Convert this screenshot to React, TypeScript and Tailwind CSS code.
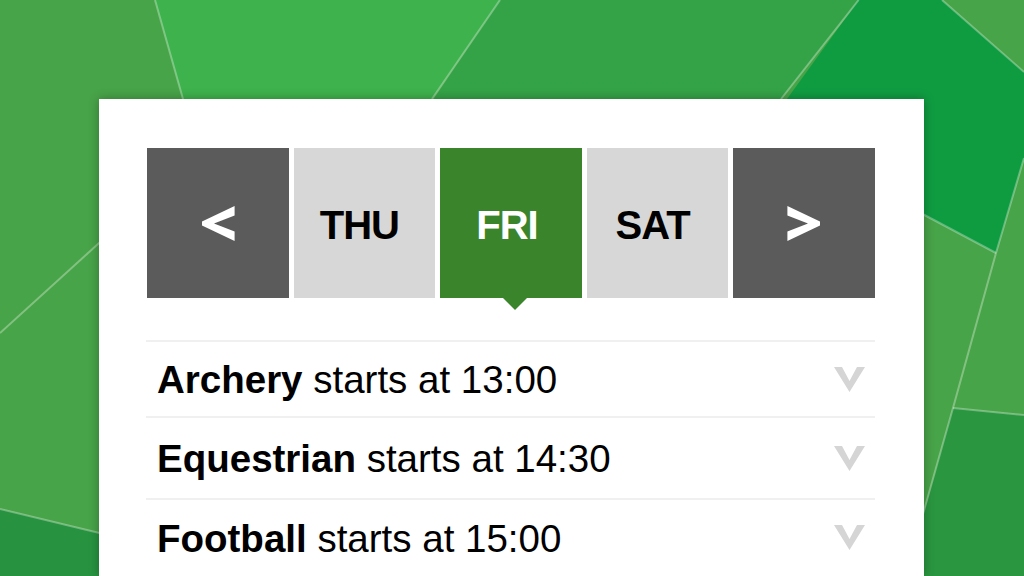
const days = [
    { label: 'THU', active: false },
    { label: 'FRI', active: true },
    { label: 'SAT', active: false },
];

const events = [
    { sport: 'Archery', time: '13:00', h: 'h-[76px]' },
    { sport: 'Equestrian', time: '14:30', h: 'h-[82px]' },
    { sport: 'Football', time: '15:00', h: 'h-[77px]' },
];

const Background = () => {
    return (
        <svg className="absolute inset-0" width="1024" height="576" viewBox="0 0 1024 576">
            <rect width="1024" height="576" fill="#48a448" />
            <polygon points="155,0 500,0 432,99 400,150 197,150" fill="#3eb24d" />
            <polygon points="500,0 858.7,0 781,99 750,150 400,150" fill="#34a347" />
            <polygon points="858.7,0 942,0 1024,72 1024,158 996,253 924,215 850,180 750,150" fill="#0f9c41" />
            <polygon points="953,408 1024,415 1024,576 880,576 924,513" fill="#2a9640" />
            <polygon points="0,509 99,533 160,548 160,576 0,576" fill="#279340" />
            <g stroke="rgba(255,255,255,0.32)" strokeWidth="2" fill="none">
                <line x1="155" y1="0" x2="183" y2="99" />
                <line x1="500" y1="0" x2="432" y2="99" />
                <line x1="0" y1="333" x2="120" y2="224" />
                <line x1="0" y1="509" x2="120" y2="538" />
                <line x1="858.7" y1="0" x2="781" y2="99" />
                <line x1="942" y1="0" x2="1024" y2="72" />
                <polyline points="1024,158 996,253 953,408 910,560" />
                <line x1="900" y1="202" x2="996" y2="253" />
                <line x1="953" y1="408" x2="1024" y2="415" />
            </g>
        </svg>
    );
};

const Arrow = ({ dir }: { dir: 'left' | 'right' }) => {
    return (
        <svg width="33" height="35" viewBox="0 0 33 35" className={dir === 'right' ? 'scale-x-[-1]' : ''}>
            <polygon points="0,15.5 32.6,0 32.6,9.5 12,17.5 32.6,25.5 32.6,35 0,19.5" fill="#fff" />
        </svg>
    );
};

const App = () => {
    return (
        <div className="relative h-[576px] w-[1024px] overflow-hidden font-['Liberation_Sans',Arial,sans-serif]">
            <Background />
            <div className="relative pl-[99px] pt-[99px]">
                <div className="h-[477px] w-[825px] bg-white pl-[48px] pt-[49px] shadow-[0_0_10px_rgba(0,0,0,0.3)]">
                    <div className="grid h-[150px] w-[728px] grid-cols-5 gap-[5px]">
                        <button className="flex items-center justify-center bg-[#5b5b5b] pl-[1px]">
                            <Arrow dir="left" />
                        </button>
                        {days.map((day) => {
                            return (
                                <button
                                    key={day.label}
                                    className={
                                        day.active
                                            ? 'relative flex items-center justify-center bg-[#3a852b] pr-[8px] pt-[3px] text-[40px] font-bold tracking-[-1px] text-white'
                                            : 'relative flex items-center justify-center bg-[#d7d7d7] pr-[10px] pt-[3px] text-[40px] font-bold tracking-[-1px] text-black'
                                    }
                                >
                                    {day.label}
                                    {day.active && (
                                        <span className="absolute left-[63px] top-full h-0 w-0 border-x-[12px] border-t-[12px] border-x-transparent border-t-[#3a852b]" />
                                    )}
                                </button>
                            );
                        })}
                        <button className="flex items-center justify-center bg-[#5b5b5b] pr-[1px]">
                            <Arrow dir="right" />
                        </button>
                    </div>
                    <div className="-ml-[1px] mt-[42px] w-[729px]">
                        {events.map((ev) => {
                            return (
                                <div
                                    key={ev.sport}
                                    className={`flex items-center justify-between border-t-2 border-[#f0f0f0] pl-[11px] pr-[10px] ${ev.h}`}
                                >
                                    <div className="pt-[3px] text-[38.5px] leading-none text-black">
                                        <span className="font-bold">{ev.sport}</span> starts at {ev.time}
                                    </div>
                                    <svg width="31" height="25" viewBox="0 0 31 25">
                                        <polygon points="0,0 8,0 15.5,14 23,0 31,0 15.5,25" fill="#d5d5d5" />
                                    </svg>
                                </div>
                            );
                        })}
                    </div>
                </div>
            </div>
        </div>
    );
};

export default App;
